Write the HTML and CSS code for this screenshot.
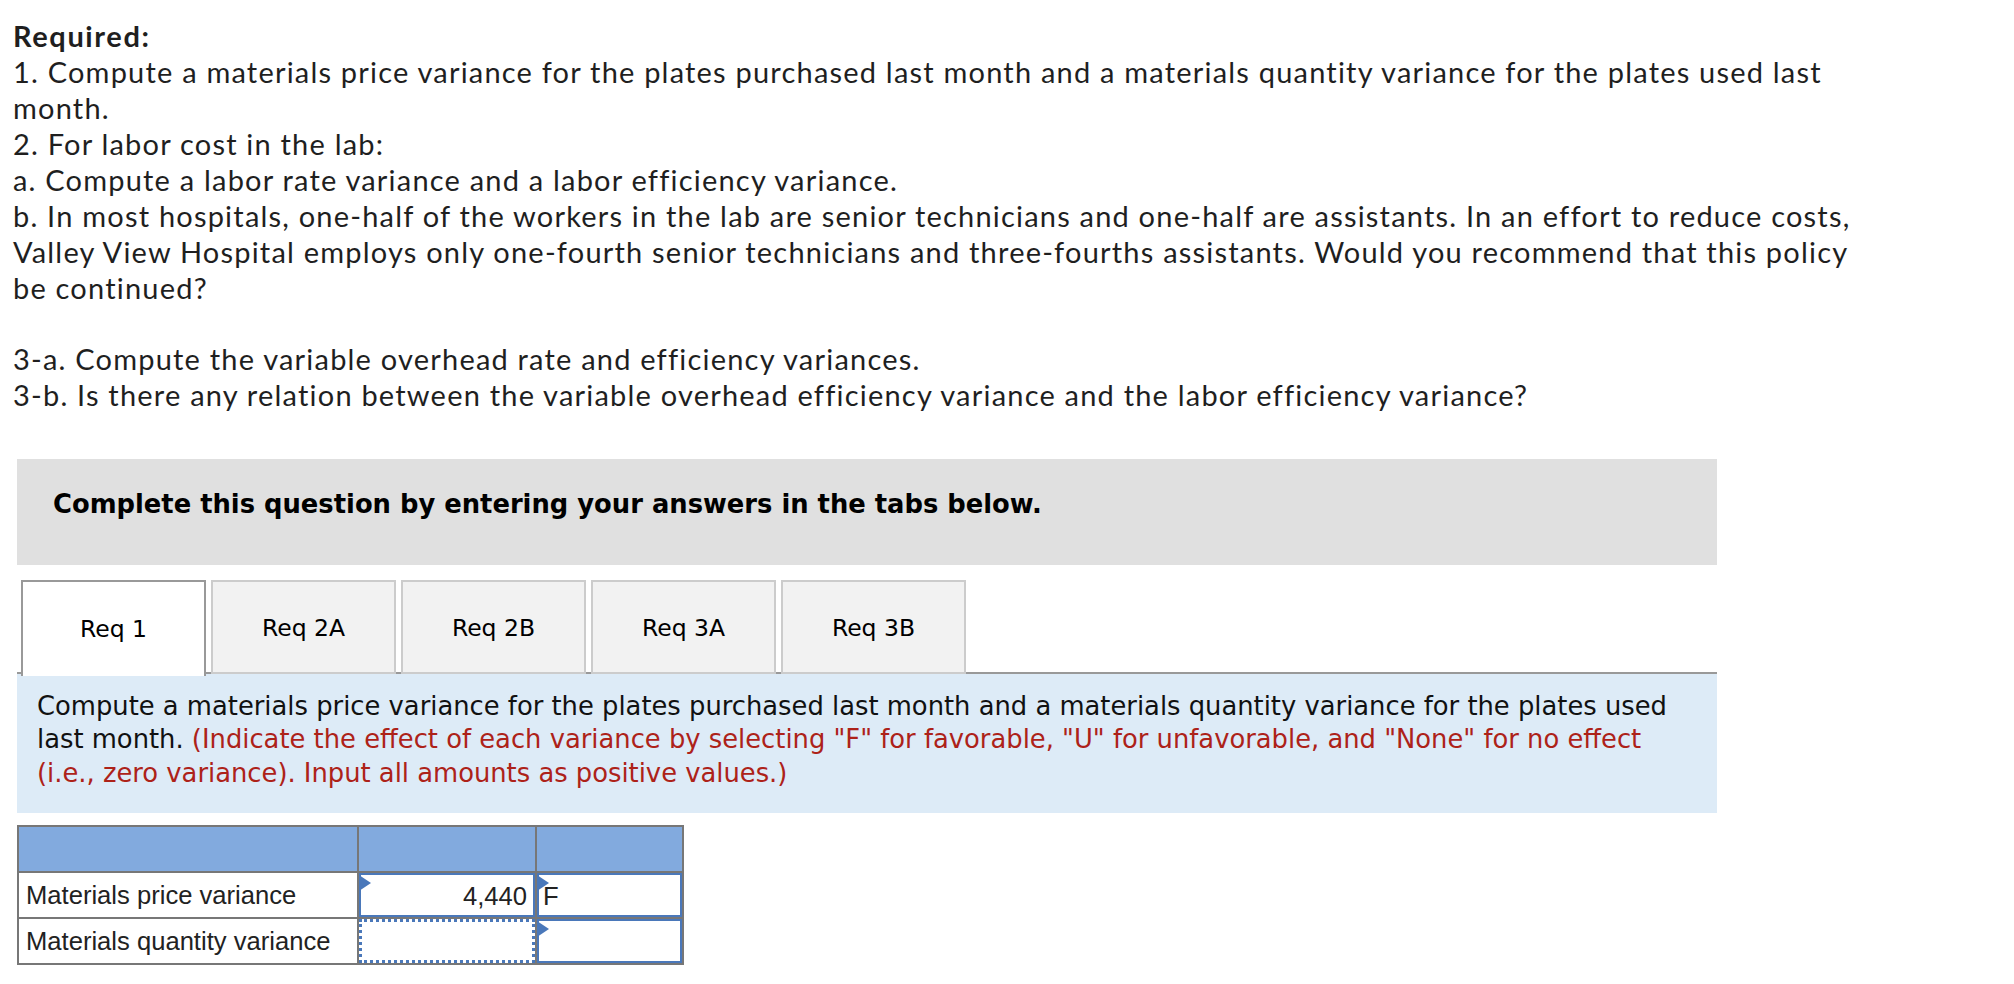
FILE: index.html
```html
<!DOCTYPE html>
<html lang="en">
<head>
<meta charset="utf-8">
<title>Required</title>
<link rel="stylesheet" href="styles.css">
</head>
<body>
<div class="page">
  <div class="required">
    <p class="req-title">Required:</p>
    <p>1. Compute a materials price variance for the plates purchased last month and a materials quantity variance for the plates used last month.</p>
    <p>2. For labor cost in the lab:</p>
    <p>a. Compute a labor rate variance and a labor efficiency variance.</p>
    <p>b. In most hospitals, one-half of the workers in the lab are senior technicians and one-half are assistants. In an effort to reduce costs, Valley View Hospital employs only one-fourth senior technicians and three-fourths assistants. Would you recommend that this policy be continued?</p>
    <p class="gap">3-a. Compute the variable overhead rate and efficiency variances.</p>
    <p>3-b. Is there any relation between the variable overhead efficiency variance and the labor efficiency variance?</p>
  </div>

  <div class="panel">
    <div class="prompt">Complete this question by entering your answers in the tabs below.</div>

    <div class="tabs">
      <div class="tab active">Req 1</div>
      <div class="tab">Req 2A</div>
      <div class="tab">Req 2B</div>
      <div class="tab">Req 3A</div>
      <div class="tab">Req 3B</div>
    </div>

    <div class="instructions">Compute a materials price variance for the plates purchased last month and a materials quantity variance for the plates used last month. <span class="red">(Indicate the effect of each variance by selecting "F" for favorable, "U" for unfavorable, and "None" for no effect (i.e., zero variance). Input all amounts as positive values.)</span></div>

    <div class="grid">
      <div class="cell head"></div>
      <div class="cell head"></div>
      <div class="cell head"></div>

      <div class="cell label">Materials price variance</div>
      <div class="cell"><div class="input solid num"><span class="flag"></span>4,440</div></div>
      <div class="cell"><div class="input solid"><span class="flag"></span>F</div></div>

      <div class="cell label">Materials quantity variance</div>
      <div class="cell"><div class="input dotted"></div></div>
      <div class="cell"><div class="input solid"><span class="flag"></span></div></div>
    </div>
  </div>
</div>
</body>
</html>
```

FILE: styles.css
```css
html, body {
  margin: 0;
  padding: 0;
  background: #ffffff;
}

.page {
  padding: 18px 0 0 13px;
}

.required {
  width: 1865px;
  font-family: "Lato", "Open Sans", sans-serif;
  font-size: 29px;
  letter-spacing: 1.2px;
  line-height: 36px;
  color: #1f1f1f;
}

.required p {
  margin: 0;
}

.required .req-title {
  font-weight: 700;
  letter-spacing: 1.6px;
}

.required .gap {
  margin-top: 34.5px;
}

.panel {
  margin-left: 4px;
  width: 1700px;
  margin-top: 46.5px;
  font-family: "DejaVu Sans", Verdana, sans-serif;
}

.prompt {
  background: #e0e0e0;
  padding: 31px 0 47px 36px;
  font-size: 25.8px;
  font-weight: 700;
  line-height: 28px;
  color: #000000;
}

.tabs {
  display: flex;
  gap: 5px;
  margin-top: 15px;
  padding-left: 4px;
  border-bottom: 2px solid #999999;
  height: 94px;
  box-sizing: border-box;
}

.tab {
  width: 185px;
  height: 94px;
  box-sizing: border-box;
  background: #f2f2f2;
  border: 2px solid #cccccc;
  display: flex;
  align-items: center;
  justify-content: center;
  font-size: 23.5px;
  color: #000000;
  padding-top: 2px;
}

.tab.active {
  background: #ffffff;
  border-color: #999999;
  border-bottom: none;
  height: 96px;
  position: relative;
  z-index: 1;
  padding-top: 0;
}

.instructions {
  background: #ddebf7;
  padding: 16px 28px 23px 20px;
  font-size: 25.8px;
  line-height: 33.4px;
  color: #111111;
}

.red {
  color: #ad2219;
}

.grid {
  display: grid;
  grid-template-columns: 338px 176px 145px;
  grid-auto-rows: 44px;
  gap: 2px;
  padding: 2px;
  background: #777777;
  width: max-content;
  margin-top: 12px;
  font-family: "Liberation Sans", Arial, sans-serif;
  font-size: 25.6px;
  color: #222222;
}

.cell {
  background: #ffffff;
  display: flex;
  align-items: center;
}

.cell.head {
  background: #82aade;
}

.cell.label {
  padding-left: 7px;
}

.input {
  position: relative;
  width: 100%;
  height: 100%;
  box-sizing: border-box;
  display: flex;
  align-items: center;
  padding: 2px 4px 0 4px;
}

.input.solid {
  border: 2px solid #4a78ba;
}

.input.dotted {
  border: 3px dotted #4a78ba;
}

.input.num {
  justify-content: flex-end;
  padding-right: 6px;
}

.flag {
  position: absolute;
  left: -2px;
  top: 0;
  width: 0;
  height: 0;
  border-left: 12px solid #4a78ba;
  border-top: 8px solid transparent;
  border-bottom: 8px solid transparent;
}
```
